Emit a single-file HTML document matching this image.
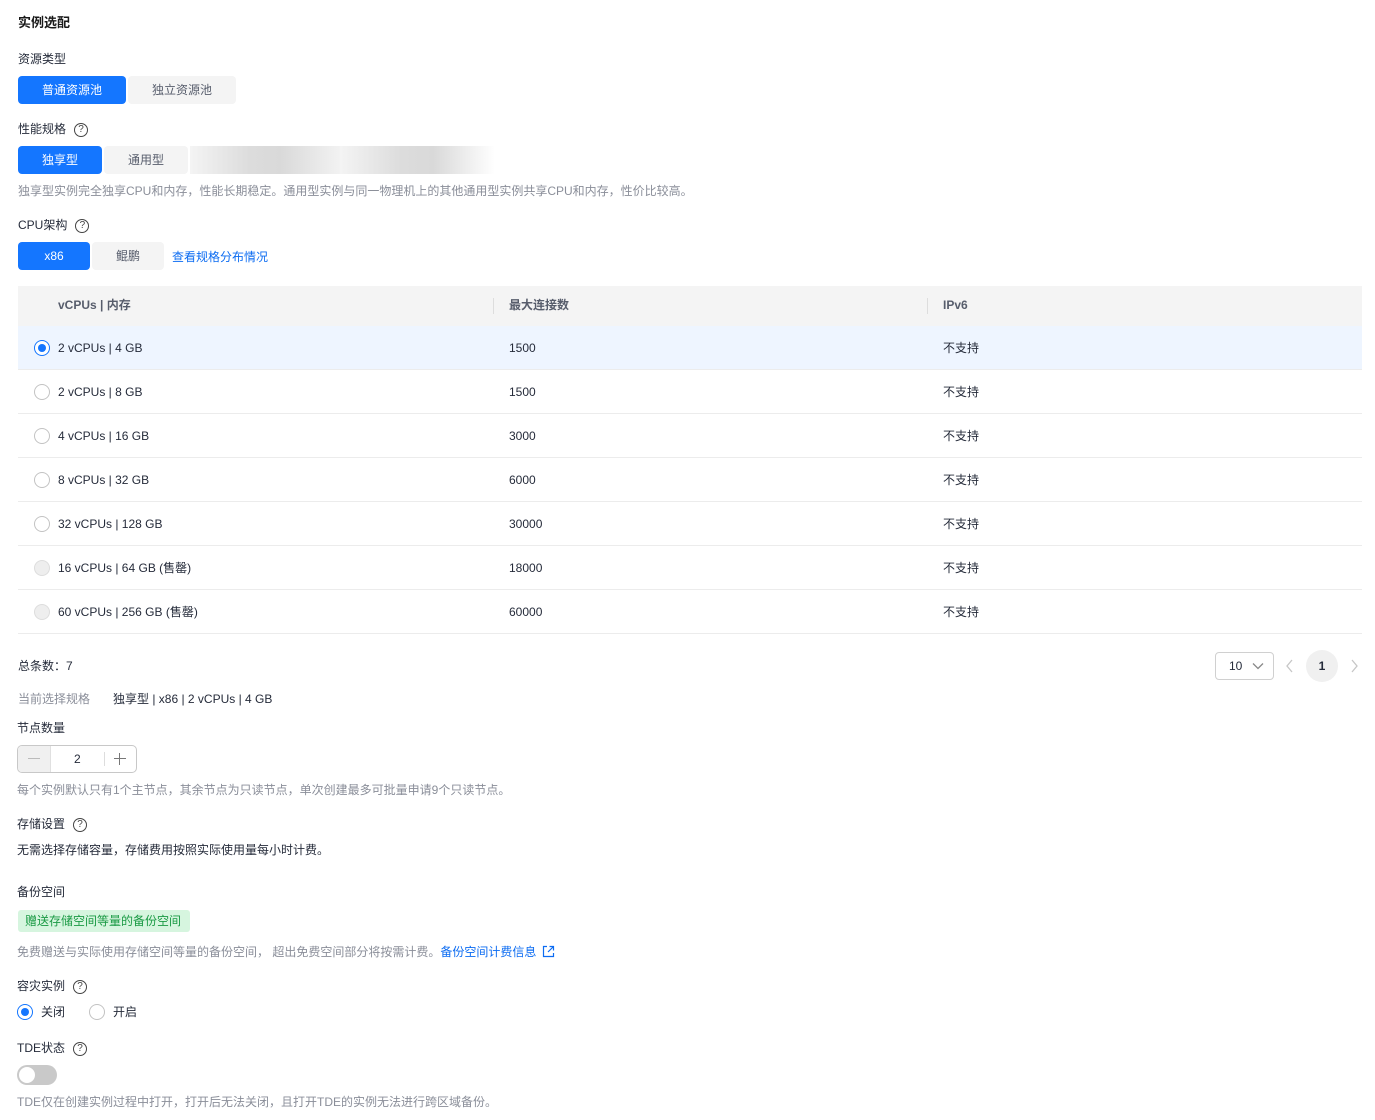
<!DOCTYPE html>
<html><head><meta charset="utf-8"><style>
*{margin:0;padding:0;box-sizing:border-box}
body{width:1375px;height:1120px;background:#fff;font-family:"Liberation Sans","Noto Sans CJK SC",sans-serif;font-size:12px;color:#252b3a;position:relative;overflow:hidden}
.a{position:absolute;white-space:nowrap;line-height:16px}
.btn{position:absolute;height:28px;border-radius:4px;background:#f4f4f4;color:#575d6c;text-align:center;line-height:28px;font-size:12px}
.btn.on{background:#1476ff;color:#fff}
.q{display:inline-block;width:14px;height:14px;border:1px solid #444;border-radius:50%;font-size:10px;line-height:12px;text-align:center;vertical-align:middle;margin-left:8px;color:#444}
.gray{color:#8a8e99}
.row{position:absolute;left:18px;width:1344px;height:44px;border-bottom:1px solid #ececec}
.row span{position:absolute;top:14px;line-height:16px}
.rd{position:absolute;left:16px;top:14px;width:16px;height:16px;border:1px solid #c3c3c3;border-radius:50%;background:#fff}
.rd.dis{background:#eee;border-color:#ddd}
.rd.on{border-color:#1476ff}
.rd.on:after{content:"";position:absolute;left:3px;top:3px;width:8px;height:8px;border-radius:50%;background:#1476ff}
</style></head><body>
<div class="a" style="left:18px;top:15px;font-size:13px;font-weight:bold;color:#191919">实例选配</div>
<div class="a" style="left:18px;top:51px">资源类型</div>
<div class="btn on" style="left:18px;top:76px;width:108px">普通资源池</div>
<div class="btn" style="left:128px;top:76px;width:108px">独立资源池</div>
<div class="a" style="left:18px;top:121px">性能规格<span class="q">?</span></div>
<div class="btn on" style="left:18px;top:146px;width:84px">独享型</div>
<div class="btn" style="left:104px;top:146px;width:84px">通用型</div>
<div style="position:absolute;left:190px;top:146px;width:150px;height:28px;background:linear-gradient(90deg,#f4f4f4,#dcdcdc 40%,#d9d9d9 60%,#f2f2f2)"></div>
<div style="position:absolute;left:340px;top:146px;width:155px;height:28px;background:linear-gradient(90deg,#f4f4f4,#dcdcdc 40%,#d9d9d9 60%,#fff)"></div>
<div class="a gray" style="left:18px;top:183px">独享型实例完全独享CPU和内存，性能长期稳定。通用型实例与同一物理机上的其他通用型实例共享CPU和内存，性价比较高。</div>
<div class="a" style="left:18px;top:217px">CPU架构<span class="q">?</span></div>
<div class="btn on" style="left:18px;top:242px;width:72px">x86</div>
<div class="btn" style="left:92px;top:242px;width:72px">鲲鹏</div>
<div class="a" style="left:172px;top:249px;color:#0c6cf2">查看规格分布情况</div>

<div style="position:absolute;left:18px;top:286px;width:1344px;height:40px;background:#f4f4f4;font-weight:bold;color:#575d6c">
<span class="a" style="left:40px;top:11px">vCPUs | 内存</span>
<div style="position:absolute;left:475px;top:12px;width:1px;height:16px;background:#ddd"></div>
<span class="a" style="left:491px;top:11px">最大连接数</span>
<div style="position:absolute;left:909px;top:12px;width:1px;height:16px;background:#ddd"></div>
<span class="a" style="left:925px;top:11px">IPv6</span>
</div>
<div class="row" style="top:326px;background:#eef5ff"><div class="rd on"></div><span style="left:40px">2 vCPUs | 4 GB</span><span style="left:491px">1500</span><span style="left:925px">不支持</span></div>
<div class="row" style="top:370px"><div class="rd"></div><span style="left:40px">2 vCPUs | 8 GB</span><span style="left:491px">1500</span><span style="left:925px">不支持</span></div>
<div class="row" style="top:414px"><div class="rd"></div><span style="left:40px">4 vCPUs | 16 GB</span><span style="left:491px">3000</span><span style="left:925px">不支持</span></div>
<div class="row" style="top:458px"><div class="rd"></div><span style="left:40px">8 vCPUs | 32 GB</span><span style="left:491px">6000</span><span style="left:925px">不支持</span></div>
<div class="row" style="top:502px"><div class="rd"></div><span style="left:40px">32 vCPUs | 128 GB</span><span style="left:491px">30000</span><span style="left:925px">不支持</span></div>
<div class="row" style="top:546px"><div class="rd dis"></div><span style="left:40px">16 vCPUs | 64 GB (售罄)</span><span style="left:491px">18000</span><span style="left:925px">不支持</span></div>
<div class="row" style="top:590px"><div class="rd dis"></div><span style="left:40px">60 vCPUs | 256 GB (售罄)</span><span style="left:491px">60000</span><span style="left:925px">不支持</span></div>

<div class="a" style="left:18px;top:658px">总条数：7</div>
<div style="position:absolute;left:1215px;top:652px;width:59px;height:28px;border:1px solid #d0d0d0;border-radius:4px"><span class="a" style="left:13px;top:5px">10</span><svg style="position:absolute;left:36px;top:9px" width="12" height="8" viewBox="0 0 12 8"><path d="M1 1.5 6 6.5 11 1.5" fill="none" stroke="#888" stroke-width="1.3"/></svg></div>
<svg style="position:absolute;left:1285px;top:659px" width="10" height="14"><path d="M7 1 2 7 7 13" fill="none" stroke="#c6c6c6" stroke-width="1.3"/></svg>
<div style="position:absolute;left:1306px;top:650px;width:32px;height:32px;border-radius:50%;background:#f0f0f0;text-align:center;line-height:32px;font-weight:bold">1</div>
<svg style="position:absolute;left:1349px;top:659px" width="10" height="14"><path d="M3 1 8 7 3 13" fill="none" stroke="#c6c6c6" stroke-width="1.3"/></svg>

<div class="a gray" style="left:18px;top:691px">当前选择规格</div>
<div class="a" style="left:113px;top:691px">独享型 | x86 | 2 vCPUs | 4 GB</div>
<div class="a" style="left:17px;top:720px">节点数量</div>
<div style="position:absolute;left:17px;top:745px;width:120px;height:28px;border:1px solid #c8c8c8;border-radius:5px;overflow:hidden">
<div style="position:absolute;left:0;top:0;width:33px;height:26px;background:#f0f0f0;border-right:1px solid #e0e0e0"></div>
<div style="position:absolute;left:10px;top:12px;width:12px;height:1px;background:#bbb"></div>
<span class="a" style="left:56px;top:5px">2</span>
<div style="position:absolute;left:86px;top:6px;width:1px;height:14px;background:#ddd"></div>
<div style="position:absolute;left:96px;top:12px;width:12px;height:1px;background:#777"></div>
<div style="position:absolute;left:101px;top:7px;width:1px;height:12px;background:#777"></div>
</div>
<div class="a gray" style="left:17px;top:782px">每个实例默认只有1个主节点，其余节点为只读节点，单次创建最多可批量申请9个只读节点。</div>
<div class="a" style="left:17px;top:816px">存储设置<span class="q">?</span></div>
<div class="a" style="left:17px;top:842px">无需选择存储容量，存储费用按照实际使用量每小时计费。</div>
<div class="a" style="left:17px;top:884px">备份空间</div>
<div style="position:absolute;left:18px;top:910px;width:172px;height:22px;background:#d6f5df;border-radius:3px;color:#1a9a44;line-height:22px;padding-left:7px">赠送存储空间等量的备份空间</div>
<div class="a gray" style="left:17px;top:944px">免费赠送与实际使用存储空间等量的备份空间， 超出免费空间部分将按需计费。<span style="color:#0c6cf2">备份空间计费信息</span><svg style="vertical-align:-2px;margin-left:6px" width="13" height="13" viewBox="0 0 13 13"><path d="M5 1.5H1.5v10h10V8M7.5 1.5h4v4M11.5 1.5 6 7" fill="none" stroke="#0c6cf2" stroke-width="1.2"/></svg></div>
<div class="a" style="left:17px;top:978px">容灾实例<span class="q">?</span></div>
<div class="rd on" style="left:17px;top:1004px"></div><div class="a" style="left:41px;top:1004px">关闭</div>
<div class="rd" style="left:89px;top:1004px"></div><div class="a" style="left:113px;top:1004px">开启</div>
<div class="a" style="left:17px;top:1040px">TDE状态<span class="q">?</span></div>
<div style="position:absolute;left:17px;top:1065px;width:40px;height:20px;border-radius:10px;background:#c9c9c9"><div style="position:absolute;left:2px;top:2px;width:16px;height:16px;border-radius:50%;background:#fff"></div></div>
<div class="a gray" style="left:17px;top:1094px">TDE仅在创建实例过程中打开，打开后无法关闭，且打开TDE的实例无法进行跨区域备份。</div>
</body></html>
